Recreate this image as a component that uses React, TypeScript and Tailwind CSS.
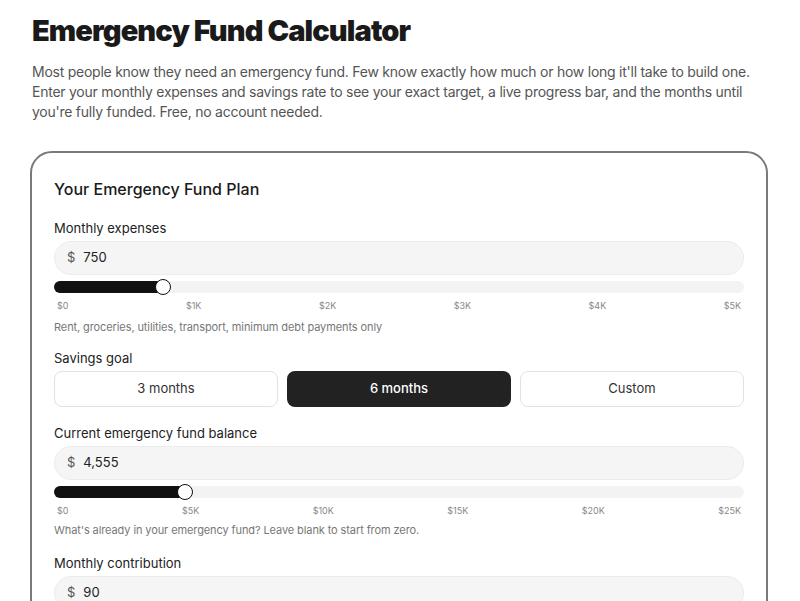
import React from 'react';

const font = { fontFamily: 'Inter, "Noto Sans", sans-serif' };

function MoneyInput({ value }: { value: string }) {
  return (
    <div className="flex h-[34px] items-center gap-2 rounded-full border border-[#ececec] bg-[#f5f5f5] px-3 text-[13px] text-[#222]">
      <span className="text-[#555]">$</span>
      <span>{value}</span>
    </div>
  );
}

function Slider({ pct, ticks }: { pct: number; ticks: string[] }) {
  return (
    <div className="mt-[6px]">
      <div className="relative h-[12px] rounded-full bg-[#f3f3f3]">
        <div className="absolute inset-y-0 left-0 rounded-full bg-[#111]" style={{ width: `${pct}%` }} />
        <div
          className="absolute top-1/2 h-[16px] w-[16px] -translate-x-1/2 -translate-y-1/2 rounded-full border-[1.5px] border-[#111] bg-white"
          style={{ left: `${pct}%` }}
        />
      </div>
      <div className="mt-[6px] flex justify-between px-[3px] text-[9px] text-[#888]">
        {ticks.map((t) => (
          <span key={t}>{t}</span>
        ))}
      </div>
    </div>
  );
}

export default function App() {
  return (
    <div className="min-h-[601px] bg-white px-8 pt-[13px] text-[#111]" style={font}>
      <h1 className="text-[29px] font-black leading-[36px] tracking-[-0.9px] text-[#1a1a1a]">
        Emergency Fund Calculator
      </h1>
      <p className="mt-[13px] text-[14px] leading-[20px] tracking-[-0.25px] text-[#555]">
        Most people know they need an emergency fund. Few know exactly how much or how long it'll take to build one.
        Enter your monthly expenses and savings rate to see your exact target, a live progress bar, and the months until
        you're fully funded. Free, no account needed.
      </p>

      <div className="ml-[-2px] mt-[29px] w-[738px] rounded-[22px] border-2 border-[#7a7a7a] px-[22px] pb-6 pt-[24px]">
        <h2 className="text-[16px] font-medium leading-[24px] text-[#1a1a1a]">Your Emergency Fund Plan</h2>

        <div className="mt-[19px] text-[13px] leading-[16px] text-[#222]">Monthly expenses</div>
        <div className="mt-[5px]">
          <MoneyInput value="750" />
        </div>
        <Slider pct={15.8} ticks={['$0', '$1K', '$2K', '$3K', '$4K', '$5K']} />
        <div className="mt-[6px] text-[11px] tracking-[-0.1px] text-[#777]">
          Rent, groceries, utilities, transport, minimum debt payments only
        </div>

        <div className="mt-[15px] text-[13px] leading-[16px] text-[#222]">Savings goal</div>
        <div className="mt-[5px] grid grid-cols-3 gap-[9px]">
          <button className="h-[36px] rounded-[8px] border border-[#e2e2e2] bg-white text-[13px] text-[#333]">
            3 months
          </button>
          <button className="h-[36px] rounded-[8px] bg-[#222] text-[13px] font-medium text-white">6 months</button>
          <button className="h-[36px] rounded-[8px] border border-[#e2e2e2] bg-white text-[13px] text-[#333]">
            Custom
          </button>
        </div>

        <div className="mt-[18px] text-[13px] leading-[16px] text-[#222]">Current emergency fund balance</div>
        <div className="mt-[5px]">
          <MoneyInput value="4,555" />
        </div>
        <Slider pct={19} ticks={['$0', '$5K', '$10K', '$15K', '$20K', '$25K']} />
        <div className="mt-[4px] text-[11px] tracking-[-0.1px] text-[#777]">
          What's already in your emergency fund? Leave blank to start from zero.
        </div>

        <div className="mt-[17px] text-[13px] leading-[16px] text-[#222]">Monthly contribution</div>
        <div className="mt-[5px]">
          <MoneyInput value="90" />
        </div>
      </div>
    </div>
  );
}
